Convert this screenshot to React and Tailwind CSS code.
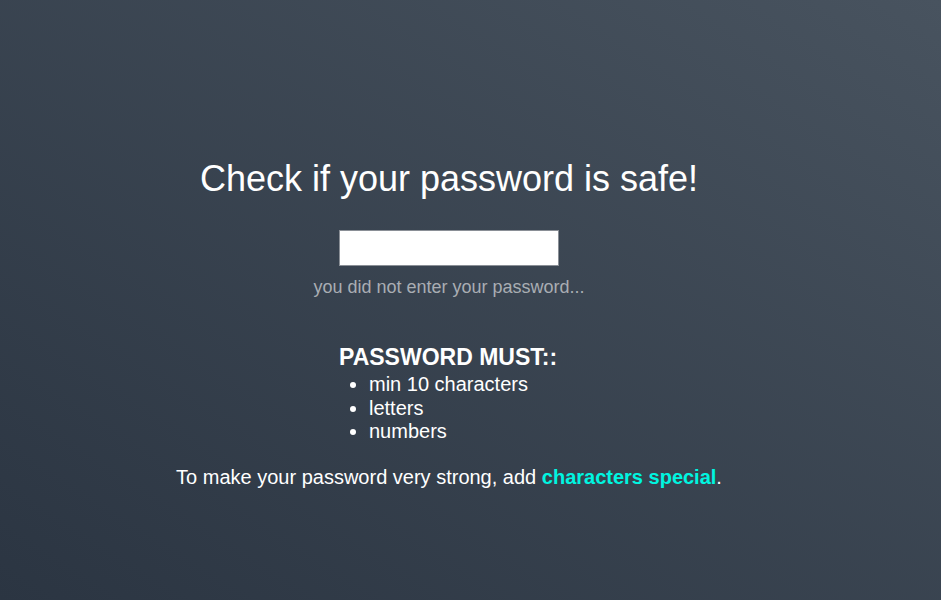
export default function App() {
  return (
    <div className="min-h-screen w-full bg-gradient-to-tr from-[#2b3542] to-[#48535f] font-['Liberation_Sans',Arial,sans-serif] text-white">
      <main className="w-[898px] flex flex-col items-center pt-[157px]">
        <h1 className="text-[36px] leading-[44px]">Check if your password is safe!</h1>

        <input
          type="password"
          className="mt-[29px] w-[220px] h-[36px] bg-white border border-[#8a8f96] outline-none px-2 text-black"
        />
        <p className="mt-[10px] text-[18px] leading-[22px] text-[#a9adb3]">
          you did not enter your password...
        </p>

        <div className="mt-[46px] w-[220px]">
          <h2 className="text-[23px] leading-[26px] font-bold">PASSWORD MUST::</h2>
          <ul className="list-disc pl-[30px] mt-[3px] text-[20px] leading-[23.5px]">
            <li>min 10 characters</li>
            <li>letters</li>
            <li>numbers</li>
          </ul>
        </div>

        <p className="mt-[21px] text-[20px] leading-[24px]">
          To make your password very strong, add{' '}
          <span className="font-bold text-[#00f5e0]">characters special</span>.
        </p>
      </main>
    </div>
  );
}
